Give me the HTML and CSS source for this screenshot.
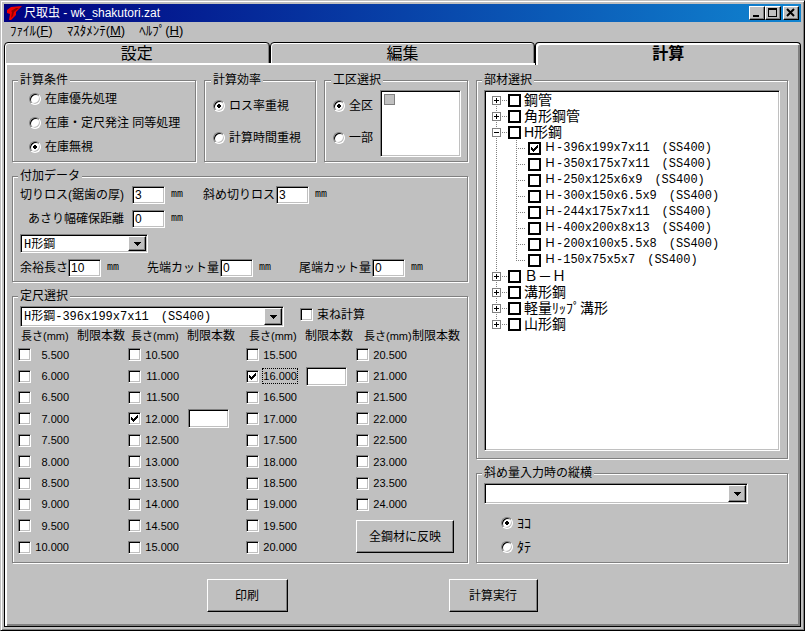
FILE: index.html
```html
<!DOCTYPE html>
<html lang="ja">
<head>
    <meta charset="UTF-8" />
    <meta name="viewport" content="width=device-width, initial-scale=1.0" />
    <title>尺取虫 - wk_shakutori.zat</title>
    <link rel="stylesheet" href="styles.css">
</head>
<body>

<div class="window">
    <header class="titlebar">
        <svg class="app-icon" viewBox="0 0 15 14" width="15" height="14">
            <path d="M0 4L4 1L15 0L9 6L9 9L4 14L2 14L3 8L0 7Z" fill="#f00000"/>
            <path d="M4 5L9 2L12 2L7 6L6 10L4 12L5 6Z" fill="#900000"/>
        </svg>
        <span class="title">尺取虫 - wk_shakutori.zat</span>
        <button type="button" class="win-btn" aria-label="最小化"><svg viewBox="0 0 12 10" width="12" height="10" shape-rendering="crispEdges"><path d="M2 7h6v2H2z"/></svg></button>
        <button type="button" class="win-btn" aria-label="最大化"><svg viewBox="0 0 12 10" width="12" height="10" shape-rendering="crispEdges"><path d="M1 0h9v9H1zM2 2v6h7V2z" fill-rule="evenodd"/></svg></button>
        <button type="button" class="win-btn win-close" aria-label="閉じる"><svg viewBox="0 0 12 10" width="12" height="10"><path d="M2 1l7 7M9 1l-7 7" stroke="#000" stroke-width="2"/></svg></button>
    </header>

    <nav class="menubar">
        <a href="#">ﾌｧｲﾙ(<u>F</u>)</a>
        <a href="#">ﾏｽﾀﾒﾝﾃ(<u>M</u>)</a>
        <a href="#">ﾍﾙﾌﾟ(<u>H</u>)</a>
    </nav>

    <div class="tabs">
        <button type="button" class="tab">設定</button>
        <button type="button" class="tab">編集</button>
        <button type="button" class="tab active">計算</button>
    </div>

    <main class="panel">
        <div class="columns">
            <div class="column">
                <div class="top-groups">
                    <fieldset class="conditions">
                        <legend>計算条件</legend>
                        <label class="choice"><input type="radio" name="cond">在庫優先処理</label>
                        <label class="choice"><input type="radio" name="cond">在庫・定尺発注 同等処理</label>
                        <label class="choice"><input type="radio" name="cond" checked>在庫無視</label>
                    </fieldset>
                    <fieldset class="efficiency">
                        <legend>計算効率</legend>
                        <label class="choice tall"><input type="radio" name="eff" checked>ロス率重視</label>
                        <label class="choice tall"><input type="radio" name="eff">計算時間重視</label>
                    </fieldset>
                    <fieldset class="area">
                        <legend>工区選択</legend>
                        <div class="area-body">
                            <div>
                                <label class="choice tall"><input type="radio" name="area" checked>全区</label>
                                <label class="choice tall"><input type="radio" name="area">一部</label>
                            </div>
                            <div class="area-list sunken"><input type="checkbox" class="area-check" aria-label="工区" disabled></div>
                        </div>
                    </fieldset>
                </div>

                <fieldset class="extra">
                    <legend>付加データ</legend>
                    <div class="line">
                        <label class="wide" for="loss">切りロス(鋸歯の厚)</label><input type="text" id="loss" class="num sunken" value="3"><span class="unit">mm</span>
                        <label class="cut" for="slant">斜め切りロス</label><input type="text" id="slant" class="num sunken" value="3"><span class="unit">mm</span>
                    </div>
                    <div class="line">
                        <label class="wide indent" for="asari">あさり幅確保距離</label><input type="text" id="asari" class="num sunken" value="0"><span class="unit">mm</span>
                    </div>
                    <div class="combo kind">
                        <select class="sunken" aria-label="鋼材種別"><option>H形鋼</option></select>
                    </div>
                    <div class="line spread">
                        <label for="margin">余裕長さ</label><input type="text" id="margin" class="num sunken" value="10"><span class="unit">mm</span>
                        <label class="cut" for="head">先端カット量</label><input type="text" id="head" class="num sunken" value="0"><span class="unit">mm</span>
                        <label class="cut" for="tail">尾端カット量</label><input type="text" id="tail" class="num sunken" value="0"><span class="unit">mm</span>
                    </div>
                </fieldset>

                <fieldset class="sizes">
                    <legend>定尺選択</legend>
                    <div class="size-top">
                        <div class="combo">
                            <select class="sunken" aria-label="定尺"><option>H形鋼-396x199x7x11　(SS400)</option></select>
                        </div>
                        <label class="choice"><input type="checkbox">束ね計算</label>
                    </div>
                    <div class="lengths">
                        <div class="head"><span>長さ(mm)</span><span>制限本数</span></div>
                        <label class="len"><input type="checkbox"><span>5.500</span></label>
                        <label class="len"><input type="checkbox"><span>6.000</span></label>
                        <label class="len"><input type="checkbox"><span>6.500</span></label>
                        <label class="len"><input type="checkbox"><span>7.000</span></label>
                        <label class="len"><input type="checkbox"><span>7.500</span></label>
                        <label class="len"><input type="checkbox"><span>8.000</span></label>
                        <label class="len"><input type="checkbox"><span>8.500</span></label>
                        <label class="len"><input type="checkbox"><span>9.000</span></label>
                        <label class="len"><input type="checkbox"><span>9.500</span></label>
                        <label class="len"><input type="checkbox"><span>10.000</span></label>

                        <div class="head"><span>長さ(mm)</span><span>制限本数</span></div>
                        <label class="len"><input type="checkbox"><span>10.500</span></label>
                        <label class="len"><input type="checkbox"><span>11.000</span></label>
                        <label class="len"><input type="checkbox"><span>11.500</span></label>
                        <div class="len-limit">
                            <label class="len"><input type="checkbox" checked><span>12.000</span></label>
                            <input type="text" class="limit sunken" aria-label="12.000 制限本数">
                        </div>
                        <label class="len"><input type="checkbox"><span>12.500</span></label>
                        <label class="len"><input type="checkbox"><span>13.000</span></label>
                        <label class="len"><input type="checkbox"><span>13.500</span></label>
                        <label class="len"><input type="checkbox"><span>14.000</span></label>
                        <label class="len"><input type="checkbox"><span>14.500</span></label>
                        <label class="len"><input type="checkbox"><span>15.000</span></label>

                        <div class="head"><span>長さ(mm)</span><span>制限本数</span></div>
                        <label class="len"><input type="checkbox"><span>15.500</span></label>
                        <div class="len-limit">
                            <label class="len"><input type="checkbox" checked><span class="focused">16.000</span></label>
                            <input type="text" class="limit sunken" aria-label="16.000 制限本数">
                        </div>
                        <label class="len"><input type="checkbox"><span>16.500</span></label>
                        <label class="len"><input type="checkbox"><span>17.000</span></label>
                        <label class="len"><input type="checkbox"><span>17.500</span></label>
                        <label class="len"><input type="checkbox"><span>18.000</span></label>
                        <label class="len"><input type="checkbox"><span>18.500</span></label>
                        <label class="len"><input type="checkbox"><span>19.000</span></label>
                        <label class="len"><input type="checkbox"><span>19.500</span></label>
                        <label class="len"><input type="checkbox"><span>20.000</span></label>

                        <div class="head last"><span>長さ(mm)</span><span>制限本数</span></div>
                        <label class="len"><input type="checkbox"><span>20.500</span></label>
                        <label class="len"><input type="checkbox"><span>21.000</span></label>
                        <label class="len"><input type="checkbox"><span>21.500</span></label>
                        <label class="len"><input type="checkbox"><span>22.000</span></label>
                        <label class="len"><input type="checkbox"><span>22.500</span></label>
                        <label class="len"><input type="checkbox"><span>23.000</span></label>
                        <label class="len"><input type="checkbox"><span>23.500</span></label>
                        <label class="len"><input type="checkbox"><span>24.000</span></label>
                        <button type="button" class="btn apply">全鋼材に反映</button>
                    </div>
                </fieldset>
            </div>

            <div class="column">
                <fieldset class="parts">
                    <legend>部材選択</legend>
                    <ul class="tree sunken">
                        <li><div class="node"><button type="button" class="toggle" aria-label="展開"></button><label><input type="checkbox">鋼管</label></div></li>
                        <li><div class="node"><button type="button" class="toggle" aria-label="展開"></button><label><input type="checkbox">角形鋼管</label></div></li>
                        <li>
                            <div class="node"><button type="button" class="toggle open" aria-label="折りたたむ"></button><label><input type="checkbox">H形鋼</label></div>
                            <ul>
                                <li><label><input type="checkbox" checked>Ｈ-396x199x7x11　(SS400)</label></li>
                                <li><label><input type="checkbox">Ｈ-350x175x7x11　(SS400)</label></li>
                                <li><label><input type="checkbox">Ｈ-250x125x6x9　(SS400)</label></li>
                                <li><label><input type="checkbox">Ｈ-300x150x6.5x9　(SS400)</label></li>
                                <li><label><input type="checkbox">Ｈ-244x175x7x11　(SS400)</label></li>
                                <li><label><input type="checkbox">Ｈ-400x200x8x13　(SS400)</label></li>
                                <li><label><input type="checkbox">Ｈ-200x100x5.5x8　(SS400)</label></li>
                                <li><label><input type="checkbox">Ｈ-150x75x5x7　(SS400)</label></li>
                            </ul>
                        </li>
                        <li><div class="node"><button type="button" class="toggle" aria-label="展開"></button><label><input type="checkbox">Ｂ－Ｈ</label></div></li>
                        <li><div class="node"><button type="button" class="toggle" aria-label="展開"></button><label><input type="checkbox">溝形鋼</label></div></li>
                        <li><div class="node"><button type="button" class="toggle" aria-label="展開"></button><label><input type="checkbox">軽量ﾘｯﾌﾟ溝形</label></div></li>
                        <li><div class="node"><button type="button" class="toggle" aria-label="展開"></button><label><input type="checkbox">山形鋼</label></div></li>
                    </ul>
                </fieldset>

                <fieldset class="direction">
                    <legend>斜め量入力時の縦横</legend>
                    <div class="combo">
                        <select class="sunken" aria-label="斜め量入力時の縦横"><option></option></select>
                    </div>
                    <div class="direction-choices">
                        <label class="choice kana"><input type="radio" name="dir" checked>ﾖｺ</label>
                        <label class="choice kana"><input type="radio" name="dir">ﾀﾃ</label>
                    </div>
                </fieldset>
            </div>
        </div>

        <div class="actions">
            <button type="button" class="btn">印刷</button>
            <button type="button" class="btn run">計算実行</button>
        </div>
    </main>
</div>

</body>
</html>
```
FILE: styles.css
```css
* {
    box-sizing: border-box;
    margin: 0;
    padding: 0;
}

body {
    font-family: "Liberation Sans", "Noto Sans CJK JP", sans-serif;
    font-size: 12px;
    line-height: 14px;
    color: #000;
    background: #c0c0c0;
}

button,
input,
select {
    font: inherit;
    color: inherit;
}

ul {
    list-style: none;
}

/* Window frame */
.window {
    display: flex;
    flex-direction: column;
    min-height: 100vh;
    padding: 3px;
    background: #c0c0c0;
    border: 1px solid;
    border-color: #c0c0c0 #000 #000 #c0c0c0;
    box-shadow: inset 1px 1px 0 #fff, inset -1px -1px 0 #808080;
}

.titlebar {
    display: flex;
    align-items: center;
    height: 18px;
    padding: 0 2px 0 3px;
    color: #fff;
    background: linear-gradient(90deg, #000080, #1084d0);
}

.title {
    flex: 1;
    padding-left: 2px;
}

.win-btn {
    display: flex;
    width: 16px;
    height: 14px;
    padding: 1px;
    background: #c0c0c0;
    border: 1px solid;
    border-color: #fff #000 #000 #fff;
    box-shadow: inset -1px -1px 0 #808080;
}

.win-close {
    margin-left: 2px;
}

.menubar {
    display: flex;
    gap: 14px;
    height: 20px;
    padding: 1px 6px;
    font-size: 13px;
    line-height: 16px;
}

.menubar a {
    color: #000;
    text-decoration: none;
}

/* Tabs */
.tabs {
    display: grid;
    grid-template-columns: repeat(3, 1fr);
    height: 21px;
}

.tab {
    background: #c0c0c0;
    border: 1px solid #000;
    border-radius: 4px 4px 0 0;
    box-shadow: inset 1px 1px 0 #fff, inset -1px 0 0 #808080;
    font-size: 16px;
    line-height: 18px;
}

.tab.active {
    height: 23px;
    border-bottom: none;
    box-shadow: inset 2px 2px 0 #fff, inset -2px 0 0 #808080;
    font-weight: bold;
    z-index: 1;
}

.panel {
    flex: 1;
    padding: 10px 12px 14px 7px;
    border: 1px solid #000;
    border-top: none;
    box-shadow: inset 2px 2px 0 #fff, inset -2px -2px 0 #808080;
}

.columns {
    display: grid;
    grid-template-columns: 19fr 13fr;
    gap: 8px;
}

.column {
    display: flex;
    flex-direction: column;
    gap: 7px;
    min-width: 0;
}

/* Group boxes */
fieldset {
    min-width: 0;
    border: 1px solid #808080;
    box-shadow: 1px 1px 0 #fff, inset 1px 1px 0 #fff;
}

legend {
    margin-left: -2px;
    padding: 0 2px;
    background: #c0c0c0;
}

.top-groups {
    display: grid;
    grid-template-columns: 23fr 14fr 18fr;
    gap: 8px;
}

.choice {
    display: flex;
    align-items: center;
    gap: 4px;
    height: 24px;
    white-space: nowrap;
}

.choice.tall {
    height: 32px;
}

.choice.kana {
    font-size: 14px;
}

.conditions {
    padding: 0 0 2px 7px;
}

.conditions .choice {
    padding-left: 9px;
}

.efficiency,
.area {
    padding: 3px 6px 2px 8px;
}

.area-body {
    display: flex;
    gap: 7px;
}

.area-list {
    flex: 1;
    height: 67px;
    padding: 2px;
}

/* Controls */
.sunken {
    background: #fff;
    border: 1px solid;
    border-color: #808080 #fff #fff #808080;
    border-radius: 0;
    box-shadow: inset 1px 1px 0 #000, inset -1px -1px 0 #c0c0c0;
    outline: none;
}

input[type="checkbox"] {
    appearance: none;
    flex: none;
    width: 13px;
    height: 13px;
    background: #fff center no-repeat;
    border: 1px solid;
    border-color: #808080 #fff #fff #808080;
    box-shadow: inset 1px 1px 0 #000, inset -1px -1px 0 #c0c0c0;
}

input[type="checkbox"]:checked {
    background-image: url("data:image/svg+xml,%3Csvg xmlns='http://www.w3.org/2000/svg' width='7' height='7' shape-rendering='crispEdges'%3E%3Cpath d='M0 2h1v1h1v1h1v-1h1v-1h1v-1h1v-1h1v3h-1v1h-1v1h-1v1h-1v1h-1v-1h-1v-1h-1z'/%3E%3C/svg%3E");
}

input[type="radio"] {
    appearance: none;
    flex: none;
    width: 12px;
    height: 12px;
    background: #fff;
    border: 1px solid;
    border-color: #808080 #fff #fff #808080;
    border-radius: 50%;
    box-shadow: inset 1px 1px 0 #000, inset -1px -1px 0 #c0c0c0;
}

input[type="radio"]:checked {
    background: radial-gradient(circle, #000 2px, #fff 2px);
}

input.area-check {
    display: block;
    width: 11px;
    height: 11px;
    margin: 1px;
    background: #c0c0c0;
    border: 1px solid #808080;
    box-shadow: none;
}

.combo {
    position: relative;
    width: 264px;
    max-width: 100%;
    height: 21px;
}

.combo select {
    display: block;
    appearance: none;
    width: 100%;
    height: 100%;
    padding: 0 18px 0 3px;
    font-family: "Liberation Mono", "Noto Sans CJK JP", monospace;
}

.combo::after {
    content: "";
    position: absolute;
    top: 2px;
    right: 2px;
    bottom: 2px;
    width: 16px;
    background: #c0c0c0 url("data:image/svg+xml,%3Csvg xmlns='http://www.w3.org/2000/svg' width='7' height='4' shape-rendering='crispEdges'%3E%3Cpath d='M0 0h7v1h-1v1h-1v1h-1v1h-1v-1h-1v-1h-1v-1h-1z'/%3E%3C/svg%3E") center no-repeat;
    border: 1px solid;
    border-color: #fff #000 #000 #fff;
    box-shadow: inset -1px -1px 0 #808080;
    pointer-events: none;
}

.combo.kind {
    width: 128px;
    height: 19px;
}

.combo.kind select {
    padding-top: 2px;
}

.btn {
    width: 81px;
    height: 33px;
    background: #c0c0c0;
    border: 1px solid;
    border-color: #fff #000 #000 #fff;
    box-shadow: inset -1px -1px 0 #808080;
}

/* Additional data */
.extra {
    display: flex;
    flex-direction: column;
    gap: 6px;
    padding: 3px 7px 4px;
}

.line {
    display: flex;
    align-items: center;
    height: 18px;
    white-space: nowrap;
}

.line .wide {
    width: 112px;
}

.line .indent {
    padding-left: 8px;
}

.line .cut {
    width: 73px;
    margin-left: 20px;
}

.line.spread label {
    width: 48px;
}

.line.spread .cut {
    width: 73px;
    margin-left: 28px;
}

.num {
    width: 33px;
    height: 18px;
    padding: 0 2px;
}

.unit {
    width: 12px;
    margin-left: 6px;
    font-family: "Liberation Mono", monospace;
    font-size: 10px;
}

/* Stock lengths */
.sizes {
    display: flex;
    flex: 1;
    flex-direction: column;
    padding: 3px 3px 4px 7px;
}

.size-top {
    display: flex;
    gap: 16px;
    height: 23px;
}

.size-top .choice {
    height: 17px;
}

.lengths {
    display: grid;
    flex: 1;
    grid-auto-flow: column;
    grid-template-rows: 15px repeat(10, minmax(21px, 1fr));
    grid-template-columns: 110fr 118fr 110fr 108fr;
    margin-left: -2px;
}

.head {
    display: flex;
    padding-left: 3px;
    white-space: nowrap;
}

.head span:first-child {
    width: 56px;
    font-size: 11px;
}

.head.last {
    padding-left: 8px;
}

.head.last span:first-child {
    width: 48px;
}

.len {
    display: flex;
    align-items: center;
    gap: 4px;
    font-size: 11px;
}

.len span {
    width: 34px;
    text-align: right;
}

.len .focused {
    outline: 1px dotted #000;
}

.len-limit {
    display: flex;
    align-items: center;
    gap: 9px;
}

.limit {
    width: 41px;
    height: 19px;
    padding: 0 3px;
}

.apply {
    grid-row: span 2;
    width: 98px;
    align-self: center;
}

/* Parts tree */
.parts {
    padding: 3px 7px 7px;
}

.tree {
    min-height: 361px;
    padding: 1px 4px 8px 7px;
    font-size: 14px;
    line-height: 16px;
}

.tree li {
    position: relative;
}

.tree label {
    display: flex;
    align-items: center;
    gap: 3px;
    height: 16px;
    white-space: nowrap;
}

.tree input[type="checkbox"] {
    border: 2px solid #000;
    box-shadow: none;
}

.node {
    display: flex;
    align-items: center;
    gap: 7px;
}

.toggle {
    position: relative;
    width: 9px;
    height: 9px;
    background: linear-gradient(#000, #000) center / 5px 1px no-repeat, linear-gradient(#000, #000) center / 1px 5px no-repeat, #fff;
    border: 1px solid #808080;
    z-index: 1;
}

.toggle.open {
    background: linear-gradient(#000, #000) center / 5px 1px no-repeat, #fff;
}

/* dotted connectors */
.tree li::before,
.tree li::after {
    content: "";
    position: absolute;
}

.tree li::before {
    top: 0;
    bottom: 0;
    left: 4px;
    width: 1px;
    background: repeating-linear-gradient(#808080 0 1px, transparent 1px 2px);
}

.tree li::after {
    top: 8px;
    left: 10px;
    width: 5px;
    height: 1px;
    background: repeating-linear-gradient(90deg, #808080 0 1px, transparent 1px 2px);
}

.tree > li:first-child::before {
    top: 8px;
}

.tree li:last-child::before {
    bottom: auto;
    height: 8px;
}

.tree ul {
    padding-left: 24px;
    font-family: "Liberation Mono", "Noto Sans CJK JP", monospace;
    font-size: 12px;
}

.tree ul li {
    padding-left: 12px;
}

.tree ul li::before {
    left: 0;
}

.tree ul li::after {
    left: 0;
    width: 10px;
}

.direction {
    padding: 3px 7px 3px;
}

.direction-choices {
    padding: 7px 0 0 17px;
}

/* Bottom buttons */
.actions {
    display: flex;
    justify-content: center;
    gap: 161px;
    padding: 16px 56px 0 0;
}

.btn.run {
    width: 89px;
}
```
